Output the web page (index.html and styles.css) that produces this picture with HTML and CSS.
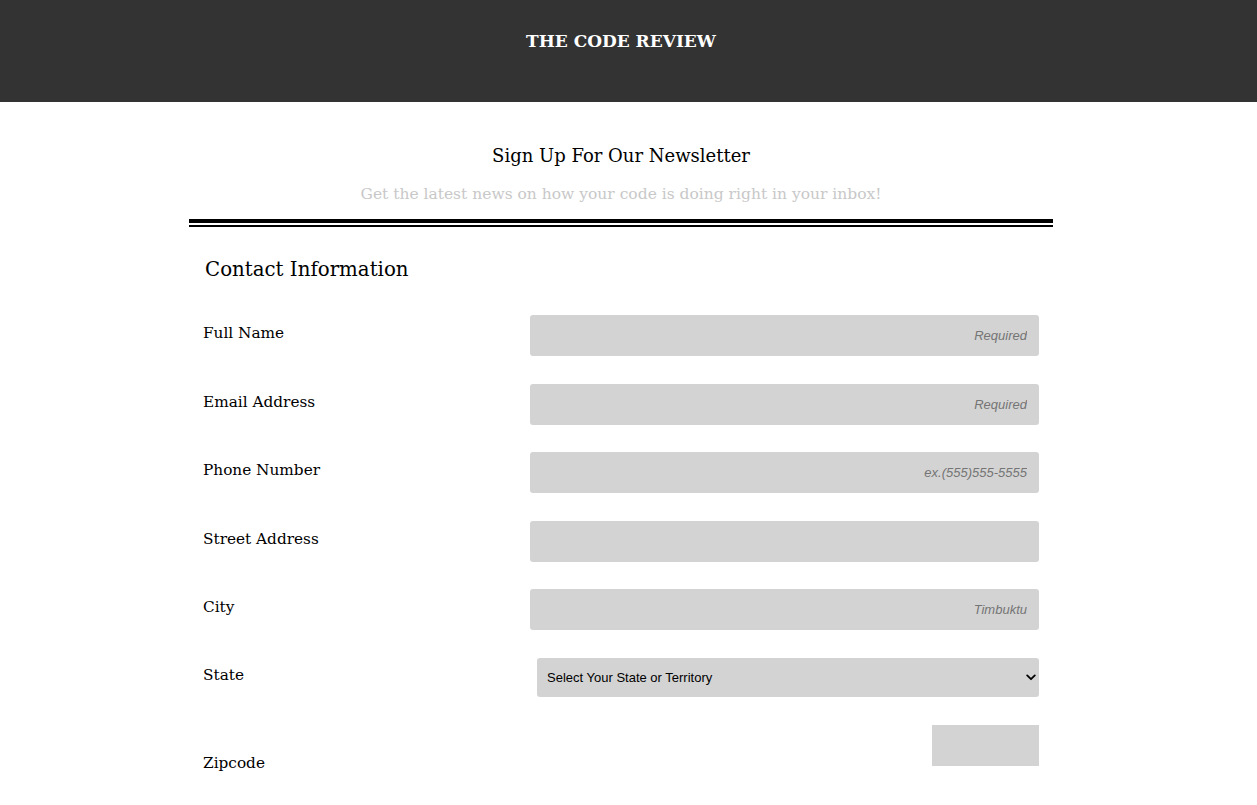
FILE: index.html
```html
<!DOCTYPE html>
<html lang="en">
<head>
<meta charset="utf-8">
<title>The Code Review</title>
<link rel="stylesheet" href="styles.css">
</head>
<body>
<header class="site-header">
  <h1 class="site-title">THE CODE REVIEW</h1>
</header>
<main class="container">
  <section class="intro">
    <h2 class="intro-title">Sign Up For Our Newsletter</h2>
    <p class="intro-sub">Get the latest news on how your code is doing right in your inbox!</p>
  </section>
  <div class="rule"></div>
  <form class="form">
    <h3 class="form-title">Contact Information</h3>
    <div class="row">
      <label class="label" for="name">Full Name</label>
      <input class="field" id="name" type="text" placeholder="Required">
    </div>
    <div class="row">
      <label class="label" for="email">Email Address</label>
      <input class="field" id="email" type="email" placeholder="Required">
    </div>
    <div class="row">
      <label class="label" for="phone">Phone Number</label>
      <input class="field" id="phone" type="tel" placeholder="ex.(555)555-5555">
    </div>
    <div class="row">
      <label class="label" for="street">Street Address</label>
      <input class="field" id="street" type="text">
    </div>
    <div class="row">
      <label class="label" for="city">City</label>
      <input class="field" id="city" type="text" placeholder="Timbuktu">
    </div>
    <div class="row row-select">
      <label class="label" for="state">State</label>
      <div class="select-wrap">
        <select class="select" id="state">
          <option>Select Your State or Territory</option>
        </select>
        <svg class="chevron" width="10" height="7" viewBox="0 0 10 7" aria-hidden="true"><path d="M1.2 1.4 L5 5.2 L8.8 1.4" fill="none" stroke="#000" stroke-width="1.8" stroke-linecap="round" stroke-linejoin="round"/></svg>
      </div>
    </div>
    <div class="row row-zip">
      <label class="label label-zip" for="zip">Zipcode</label>
      <input class="field field-zip" id="zip" type="text">
    </div>
  </form>
</main>
</body>
</html>
```
FILE: styles.css
```css
* { box-sizing: border-box; }
html, body { margin: 0; padding: 0; }
body {
  font-family: "DejaVu Serif", "Liberation Serif", serif;
  color: #000;
  background: #fff;
}
.site-header {
  background: #333333;
  height: 102px;
  padding-top: 28px;
  padding-right: 15px;
}
.site-title {
  margin: 0;
  text-align: center;
  color: #fff;
  font-size: 17px;
  font-weight: bold;
  line-height: 26px;
}
.container {
  width: 864px;
  margin: 0 auto;
  position: relative;
  left: -7.5px;
  padding-bottom: 60px;
}
.intro { text-align: center; padding-top: 42px; }
.intro-title {
  margin: 0;
  font-size: 18px;
  font-weight: normal;
  line-height: 24px;
}
.intro-sub {
  margin: 16px 0 0;
  font-size: 15.5px;
  line-height: 20px;
  color: #c8c8c8;
}
.rule {
  margin-top: 15px;
  height: 8px;
  border-top: 4px solid #000;
  border-bottom: 2px solid #000;
}
.form { padding: 0 14px; }
.form-title {
  margin: 30px 0 0 2px;
  font-size: 19.8px;
  font-weight: normal;
  line-height: 26px;
}
.row {
  display: flex;
  justify-content: space-between;
  align-items: flex-start;
  margin-top: 27.5px;
}
.form-title + .row { margin-top: 32px; }
.label {
  font-size: 15.3px;
  line-height: 20px;
  padding-top: 8px;
}
.field {
  width: 509px;
  height: 41px;
  border: none;
  border-radius: 3px;
  background: #d3d3d3;
  padding: 0 12px;
  text-align: right;
  font-family: "Liberation Sans", Arial, sans-serif;
  font-size: 13px;
  outline: none;
}
.field::placeholder {
  color: #757575;
  font-style: italic;
}
.select-wrap {
  position: relative;
  width: 502px;
}
.select {
  width: 100%;
  height: 39px;
  border: none;
  border-radius: 3px;
  background: #d3d3d3;
  padding: 0 10px;
  font-family: "Liberation Sans", Arial, sans-serif;
  font-size: 13px;
  color: #000;
  appearance: none;
  -webkit-appearance: none;
  outline: none;
}
.chevron {
  position: absolute;
  right: 3px;
  top: 16px;
}
.row-select .label { padding-top: 7px; }
.row-zip { margin-top: 28px; }
.label-zip { padding-top: 28px; }
.field-zip {
  width: 107px;
  border-radius: 0;
}
```
